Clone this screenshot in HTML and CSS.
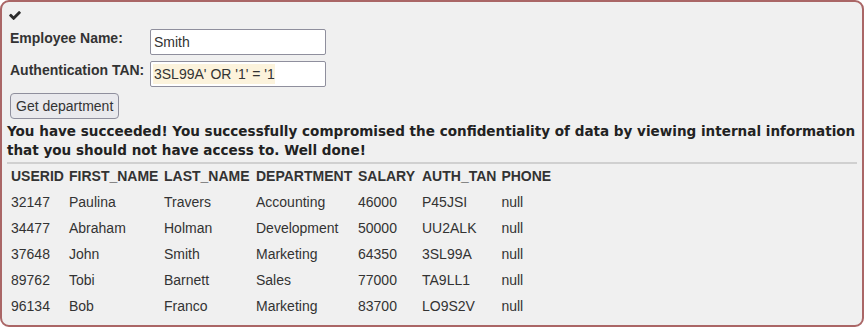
FILE: index.html
```html
<!DOCTYPE html>
<html lang="en">
<head>
  <meta charset="UTF-8" />
  <title>SQL Injection - Get department</title>
  <link rel="stylesheet" href="styles.css">
</head>
<body>

  <div class="attack-container">
    <div class="assignment-success">
      <svg class="check" viewBox="121 334 1550 1188" width="12" height="9">
        <path d="M1671 566q0 40-28 68l-724 724-136 136q-28 28-68 28t-68-28l-136-136-362-362q-28-28-28-68t28-68l136-136q28-28 68-28t68 28l294 295 656-657q28-28 68-28t68 28l136 136q28 28 28 68z" />
      </svg>
    </div>

    <form class="attack-form">
      <div class="form-grid">
        <label for="name">Employee Name:</label>
        <input type="text" id="name" value="Smith">
        <label for="auth_tan">Authentication TAN:</label>
        <input type="text" id="auth_tan" class="marked" value="3SL99A' OR '1' = '1">
      </div>
      <button type="button">Get department</button>
    </form>

    <div class="attack-feedback">You have succeeded! You successfully compromised the confidentiality of data by viewing internal information that you should not have access to. Well done!</div>
    <hr>

    <table class="attack-output">
      <tr>
        <th>USERID</th><th>FIRST_NAME</th><th>LAST_NAME</th><th>DEPARTMENT</th><th>SALARY</th><th>AUTH_TAN</th><th>PHONE</th>
      </tr>
      <tr><td>32147</td><td>Paulina</td><td>Travers</td><td>Accounting</td><td>46000</td><td>P45JSI</td><td>null</td></tr>
      <tr><td>34477</td><td>Abraham</td><td>Holman</td><td>Development</td><td>50000</td><td>UU2ALK</td><td>null</td></tr>
      <tr><td>37648</td><td>John</td><td>Smith</td><td>Marketing</td><td>64350</td><td>3SL99A</td><td>null</td></tr>
      <tr><td>89762</td><td>Tobi</td><td>Barnett</td><td>Sales</td><td>77000</td><td>TA9LL1</td><td>null</td></tr>
      <tr><td>96134</td><td>Bob</td><td>Franco</td><td>Marketing</td><td>83700</td><td>LO9S2V</td><td>null</td></tr>
    </table>
  </div>

</body>
</html>
```

FILE: styles.css
```css
body {
  margin: 0;
  font-family: "Liberation Sans", Arial, sans-serif;
  font-size: 14px;
  color: #333;
  background: #fff;
}

.attack-container {
  box-sizing: border-box;
  height: 100vh;
  background-color: #f0f0f0;
  border: 2px solid #a66;
  border-radius: 9px;
  padding: 0 5px;
  overflow: hidden;
}

.assignment-success {
  height: 27px;
  padding: 9px 0 0 2px;
  box-sizing: border-box;
}

.check {
  display: block;
  fill: #2b2b2b;
}

.attack-form {
  margin: 0 0 0 3px;
}

.form-grid {
  display: grid;
  grid-template-columns: 140px 176px;
  row-gap: 6px;
  align-items: start;
}

.form-grid label {
  font-weight: bold;
  line-height: 16px;
  padding-top: 1px;
}

.form-grid input {
  box-sizing: border-box;
  width: 176px;
  height: 26px;
  margin: 0;
  padding: 0 3px;
  border: 1px solid #8f8f9d;
  border-radius: 2px;
  background: #fff;
  font-family: "Liberation Sans", Arial, sans-serif;
  font-size: 14px;
  color: #333;
}

.form-grid input.marked {
  background: #fff linear-gradient(#fcf3dc, #fcf3dc) no-repeat 2px 2px / 122px 20px;
}

.attack-form button {
  margin: 6px 0 0 0;
  height: 26px;
  padding: 0 5px;
  border: 1px solid #8f8f9d;
  border-radius: 4px;
  background: #e9e9ed;
  font-family: "Liberation Sans", Arial, sans-serif;
  font-size: 14px;
  color: #333;
}

.attack-feedback {
  margin-top: 3px;
  font-family: "DejaVu Sans", sans-serif;
  font-weight: bold;
  font-size: 13.55px;
  line-height: 19px;
  color: #222;
}

hr {
  margin: 2px 0 0;
  border: 0;
  border-top: 2px solid #d0d0d0;
}

.attack-output {
  margin: -2px 0 0 1px;
  border-collapse: separate;
  border-spacing: 1px 2px;
  font-size: 14px;
  line-height: 16px;
}

.attack-output th,
.attack-output td {
  padding: 4px 2px;
  text-align: left;
  white-space: nowrap;
}

.attack-output th {
  font-weight: bold;
}

.attack-output th:nth-child(1) { width: 53px; }
.attack-output th:nth-child(2) { width: 90px; }
.attack-output th:nth-child(3) { width: 87px; }
.attack-output th:nth-child(4) { width: 97px; }
.attack-output th:nth-child(5) { width: 59px; }
.attack-output th:nth-child(6) { width: 74px; }
```
